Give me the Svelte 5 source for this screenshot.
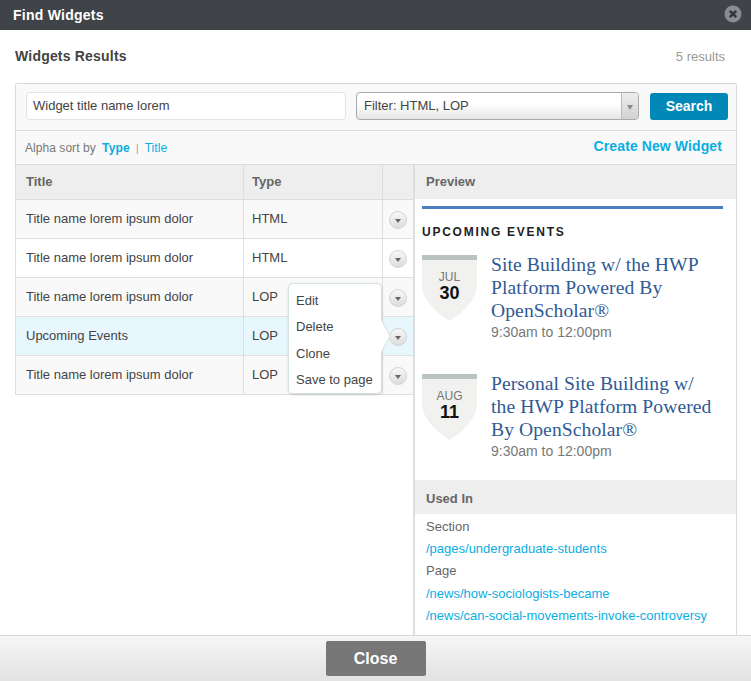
<script>
	const rows = [
		{ title: 'Title name lorem ipsum dolor', type: 'HTML', tone: 'odd' },
		{ title: 'Title name lorem ipsum dolor', type: 'HTML', tone: '' },
		{ title: 'Title name lorem ipsum dolor', type: 'LOP', tone: 'odd' },
		{ title: 'Upcoming Events', type: 'LOP', tone: 'active', menu: true },
		{ title: 'Title name lorem ipsum dolor', type: 'LOP', tone: 'odd' }
	];
	const menu = ['Edit', 'Delete', 'Clone', 'Save to page'];
	const events = [
		{ month: 'JUL', day: '30', title: 'Site Building w/ the HWP Platform Powered By OpenScholar®' },
		{ month: 'AUG', day: '11', title: 'Personal Site Building w/ the HWP Platform Powered By OpenScholar®' }
	];
</script>

<div class="dialog">
	<header class="titlebar">
		<span>Find Widgets</span>
		<svg class="close-x" width="18" height="18" viewBox="0 0 18 18">
			<circle cx="9" cy="9" r="8.5" fill="#8a8d96" />
			<path d="M5.8 5.8l6.4 6.4M12.2 5.8l-6.4 6.4" stroke="#33363a" stroke-width="2.6" />
		</svg>
	</header>

	<div class="results-head">
		<h2>Widgets Results</h2>
		<span class="count">5 results</span>
	</div>

	<section class="panel">
		<div class="tools">
			<div class="search-bar">
				<div class="field">Widget title name lorem</div>
				<div class="select">
					<span class="select-label">Filter: HTML, LOP</span>
					<span class="select-arrow"></span>
				</div>
				<button class="search">Search</button>
			</div>
			<div class="sort-bar">
				<div class="sort">
					Alpha sort by <a class="sort-on" href="#type">Type</a><i>|</i><a href="#title">Title</a>
				</div>
				<a class="create" href="#new">Create New Widget</a>
			</div>
		</div>

		<div class="split">
			<div class="list">
				<div class="row head">
					<div class="c-title">Title</div>
					<div class="c-type">Type</div>
					<div class="c-act"></div>
				</div>
				{#each rows as row}
					<div class="row {row.tone}">
						<div class="c-title">{row.title}</div>
						<div class="c-type">{row.type}</div>
						<div class="c-act">
							<span class="round"></span>
							{#if row.menu}
								<div class="popover">
									{#each menu as item}
										<div class="pop-item">{item}</div>
									{/each}
									<svg class="pop-arrow" width="10" height="34" viewBox="0 0 10 34">
										<path d="M0 0L9 17L0 34" fill="#fff" stroke="#d5e2e2" />
									</svg>
								</div>
							{/if}
						</div>
					</div>
				{/each}
			</div>

			<aside class="preview">
				<div class="side-head">Preview</div>
				<div class="widget">
					<h3>UPCOMING EVENTS</h3>
					{#each events as ev}
						<div class="event">
							<div class="badge">
								<svg width="55" height="66" viewBox="0 0 55 66">
									<path d="M0 5H55V29C55 44 42 57 27.500 66C13 57 0 44 0 29Z" fill="#f1f1ef" />
									<rect width="55" height="5" fill="#b9c4c2" />
								</svg>
								<div class="date">
									<span class="month">{ev.month}</span>
									<span class="day">{ev.day}</span>
								</div>
							</div>
							<div class="info">
								<a class="ev-title" href="#event">{ev.title}</a>
								<div class="time">9:30am to 12:00pm</div>
							</div>
						</div>
					{/each}
				</div>
				<div class="side-head used">Used In</div>
				<div class="used-list">
					<div>Section</div>
					<a href="#p">/pages/undergraduate-students</a>
					<div>Page</div>
					<a href="#a">/news/how-sociologists-became</a>
					<a href="#b">/news/can-social-movements-invoke-controversy</a>
				</div>
			</aside>
		</div>
	</section>

	<footer class="foot">
		<button class="close">Close</button>
	</footer>
</div>

<style>
	:global(body) {
		background: #fff;
	}

	.dialog {
		width: 751px;
		height: 681px;
		display: flex;
		flex-direction: column;
		overflow: hidden;
		font-family: 'Liberation Sans', Arial, sans-serif;
		font-size: 13px;
		color: #444;
		background: #fff;
	}

	.titlebar {
		flex: none;
		height: 30px;
		display: flex;
		align-items: center;
		justify-content: space-between;
		padding: 0 9px 0 13px;
		background: #404347;
		color: #fff;
		font-size: 14px;
		font-weight: bold;
		letter-spacing: 0.25px;
	}

	.close-x {
		margin-top: -2px;
	}

	.results-head {
		flex: none;
		height: 53px;
		display: flex;
		align-items: center;
		justify-content: space-between;
		padding: 0 26px 0 15px;
	}

	h2 {
		margin: 0 0 1px;
		font-size: 14px;
		letter-spacing: 0.2px;
		color: #444;
	}

	.count {
		color: #999;
	}

	.panel {
		flex: 1;
		min-height: 0;
		display: flex;
		flex-direction: column;
		margin: 0 14px 0 15px;
		border-top: 1px solid #d9d9d9;
		border-right: 1px solid #d9d9d9;
		border-radius: 3px 3px 0 0;
		overflow: hidden;
	}

	.tools {
		flex: none;
		border-left: 1px solid #d9d9d9;
		background: #f9f9f9;
	}

	.search-bar {
		height: 44px;
		padding: 0 7px 2px 10px;
		display: flex;
		align-items: center;
		border-bottom: 1px solid #dcdcdc;
	}

	.field {
		width: 312px;
		height: 26px;
		line-height: 25px;
		padding-left: 6px;
		margin-right: 10px;
		background: #fff;
		border: 1px solid #e2e2e2;
		border-radius: 4px;
	}

	.select {
		width: 281px;
		height: 26px;
		display: flex;
		justify-content: space-between;
		margin-right: 11px;
		background: linear-gradient(#fff 40%, #e6e6e6);
		border: 1px solid #aaa;
		border-radius: 4px;
	}

	.select-label {
		line-height: 25px;
		padding-left: 7px;
	}

	.select-arrow {
		position: relative;
		flex: none;
		width: 16px;
		border-left: 1px solid #bbb;
		border-radius: 0 3px 3px 0;
		background: linear-gradient(#eee, #d2d2d2);
	}

	.select-arrow::after {
		content: '';
		position: absolute;
		left: 5px;
		top: 12px;
		border: 3.500px solid transparent;
		border-top: 5px solid #888;
	}

	.search {
		width: 78px;
		height: 27px;
		padding: 0;
		border: 0;
		border-radius: 3px;
		background: #0088b8;
		color: #fff;
		font: bold 14px 'Liberation Sans', Arial, sans-serif;
	}

	.sort-bar {
		height: 33px;
		display: flex;
		align-items: center;
		justify-content: space-between;
		padding: 0 14px 0 9px;
		border-bottom: 1px solid #dcdcdc;
	}

	.sort {
		font-size: 12px;
		color: #777;
		letter-spacing: 0.05px;
	}

	.sort a {
		color: #09aee3;
		text-decoration: none;
	}

	.sort a.sort-on {
		margin-left: 3px;
		font-weight: bold;
		letter-spacing: 0.2px;
	}

	.sort i {
		margin: 0 6px;
		font-style: normal;
		color: #999;
		font-size: 10px;
	}

	.create {
		font-size: 14px;
		font-weight: bold;
		letter-spacing: 0.1px;
		color: #09aee3;
		text-decoration: none;
		margin-bottom: 4px;
	}

	.split {
		flex: 1;
		min-height: 0;
		display: flex;
	}

	.list {
		flex: none;
		width: 398px;
	}

	.row {
		display: flex;
		height: 38px;
		border-left: 1px solid #dedede;
		border-bottom: 1px solid #dedede;
		line-height: 38px;
		background: #fff;
	}

	.row.odd {
		background: #f9f9f9;
	}

	.row.active {
		background: #e8f6fd;
	}

	.row.head {
		height: 34px;
		line-height: 34px;
		background: #eee;
		font-weight: bold;
		color: #666;
	}

	.c-title {
		width: 228px;
		padding-left: 10px;
		box-sizing: border-box;
		border-right: 1px solid #dedede;
	}

	.c-type {
		width: 139px;
		padding-left: 8px;
		box-sizing: border-box;
		border-right: 1px solid #dedede;
	}

	.c-act {
		position: relative;
		flex: 1;
		display: flex;
		align-items: center;
		justify-content: center;
	}

	.round {
		position: relative;
		width: 16px;
		height: 16px;
		border: 1px solid #d4d4d4;
		border-radius: 50%;
		background: linear-gradient(#f8f8f8, #dcdcdc);
		margin-top: 1px;
	}

	.round::after {
		content: '';
		position: absolute;
		left: 5px;
		top: 7px;
		border: 3px solid transparent;
		border-top: 4px solid #666;
	}

	.popover {
		position: absolute;
		right: 31px;
		top: -34px;
		z-index: 2;
		width: 94px;
		height: 111px;
		box-sizing: border-box;
		padding: 4px 0 0 7px;
		background: #fff;
		border: 1px solid #d5e2e2;
		border-radius: 5px;
		box-shadow: 0 1px 3px rgba(0, 0, 0, 0.12);
	}

	.pop-item {
		height: 26.300px;
		line-height: 26px;
		color: #444;
		white-space: nowrap;
	}

	.pop-arrow {
		position: absolute;
		left: 92px;
		top: 35px;
	}

	.preview {
		flex: 1;
		min-width: 0;
		border-left: 2px solid #dedede;
	}

	.side-head {
		height: 34px;
		line-height: 34px;
		padding-left: 11px;
		background: #eee;
		font-weight: bold;
		color: #666;
	}

	.side-head.used {
		line-height: 37px;
	}

	.widget {
		height: 274px;
		margin: 7px 13px 0 7px;
		border-top: 3px solid #4a7cc0;
		box-sizing: border-box;
	}

	h3 {
		margin: 16px 0 0;
		font-size: 12px;
		line-height: 14px;
		letter-spacing: 1.75px;
		color: #222;
	}

	.event {
		display: flex;
		height: 109px;
		margin-top: 10px;
	}

	.event:first-of-type {
		margin-top: 16px;
	}

	.event:last-child {
		height: 92px;
	}

	.badge {
		position: relative;
		flex: none;
		width: 55px;
		height: 66px;
		margin-right: 14px;
	}

	.badge svg {
		display: block;
	}

	.date {
		position: absolute;
		left: 0;
		right: 0;
		top: 16px;
		display: flex;
		flex-direction: column;
		align-items: center;
		font-weight: bold;
	}

	.month {
		font-size: 12px;
		line-height: 13px;
		font-weight: normal;
		color: #777;
	}

	.day {
		font-size: 18px;
		line-height: 18px;
		color: #111;
	}

	.info {
		width: 226px;
		margin-top: -2px;
	}

	.ev-title {
		display: block;
		font-family: 'Liberation Serif', Georgia, serif;
		font-size: 19.600px;
		letter-spacing: 0.08px;
		line-height: 23px;
		color: #2f5a94;
		text-decoration: none;
	}

	.time {
		font-size: 14px;
		line-height: 20px;
		color: #777;
	}

	.used-list {
		padding: 2px 0 0 11px;
		line-height: 22.200px;
		color: #666;
		font-size: 13px;
	}

	.used-list a {
		display: block;
		color: #09aee3;
		text-decoration: none;
		white-space: nowrap;
	}

	.foot {
		flex: none;
		height: 45px;
		display: flex;
		justify-content: center;
		align-items: center;
		border-top: 1px solid #d9d9d9;
		background: linear-gradient(#f6f6f6, #e2e2e2);
	}

	.close {
		width: 100px;
		height: 35px;
		padding: 0;
		border: 0;
		border-radius: 2px;
		background: #777;
		color: #fff;
		font: bold 16px 'Liberation Sans', Arial, sans-serif;
	}
</style>
